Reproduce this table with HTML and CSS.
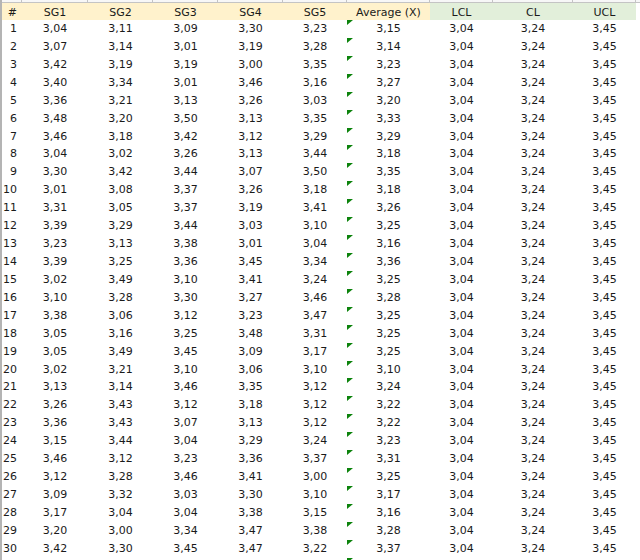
FILE: index.html
```html
<!DOCTYPE html>
<html>
<head>
<meta charset="utf-8">
<link rel="stylesheet" href="styles.css">
</head>
<body>
<div class="sheet">
  <div class="row strip"><span></span><span></span><span></span><span></span><span></span><span></span><span></span><span></span><span></span><span></span><span></span></div>
  <div class="row head">
    <span class="idx">#</span><span>SG1</span><span>SG2</span><span>SG3</span><span>SG4</span><span>SG5</span><span>Average (X)</span><span class="g">LCL</span><span class="g">CL</span><span class="g">UCL</span><span class="end"></span>
  </div>
  <div class="row"><span class="idx">1</span><span>3,04</span><span>3,11</span><span>3,09</span><span>3,30</span><span>3,23</span><span class="avg">3,15</span><span>3,04</span><span>3,24</span><span>3,45</span><span></span></div>
  <div class="row"><span class="idx">2</span><span>3,07</span><span>3,14</span><span>3,01</span><span>3,19</span><span>3,28</span><span class="avg">3,14</span><span>3,04</span><span>3,24</span><span>3,45</span><span></span></div>
  <div class="row"><span class="idx">3</span><span>3,42</span><span>3,19</span><span>3,19</span><span>3,00</span><span>3,35</span><span class="avg">3,23</span><span>3,04</span><span>3,24</span><span>3,45</span><span></span></div>
  <div class="row"><span class="idx">4</span><span>3,40</span><span>3,34</span><span>3,01</span><span>3,46</span><span>3,16</span><span class="avg">3,27</span><span>3,04</span><span>3,24</span><span>3,45</span><span></span></div>
  <div class="row"><span class="idx">5</span><span>3,36</span><span>3,21</span><span>3,13</span><span>3,26</span><span>3,03</span><span class="avg">3,20</span><span>3,04</span><span>3,24</span><span>3,45</span><span></span></div>
  <div class="row"><span class="idx">6</span><span>3,48</span><span>3,20</span><span>3,50</span><span>3,13</span><span>3,35</span><span class="avg">3,33</span><span>3,04</span><span>3,24</span><span>3,45</span><span></span></div>
  <div class="row"><span class="idx">7</span><span>3,46</span><span>3,18</span><span>3,42</span><span>3,12</span><span>3,29</span><span class="avg">3,29</span><span>3,04</span><span>3,24</span><span>3,45</span><span></span></div>
  <div class="row"><span class="idx">8</span><span>3,04</span><span>3,02</span><span>3,26</span><span>3,13</span><span>3,44</span><span class="avg">3,18</span><span>3,04</span><span>3,24</span><span>3,45</span><span></span></div>
  <div class="row"><span class="idx">9</span><span>3,30</span><span>3,42</span><span>3,44</span><span>3,07</span><span>3,50</span><span class="avg">3,35</span><span>3,04</span><span>3,24</span><span>3,45</span><span></span></div>
  <div class="row"><span class="idx">10</span><span>3,01</span><span>3,08</span><span>3,37</span><span>3,26</span><span>3,18</span><span class="avg">3,18</span><span>3,04</span><span>3,24</span><span>3,45</span><span></span></div>
  <div class="row"><span class="idx">11</span><span>3,31</span><span>3,05</span><span>3,37</span><span>3,19</span><span>3,41</span><span class="avg">3,26</span><span>3,04</span><span>3,24</span><span>3,45</span><span></span></div>
  <div class="row"><span class="idx">12</span><span>3,39</span><span>3,29</span><span>3,44</span><span>3,03</span><span>3,10</span><span class="avg">3,25</span><span>3,04</span><span>3,24</span><span>3,45</span><span></span></div>
  <div class="row"><span class="idx">13</span><span>3,23</span><span>3,13</span><span>3,38</span><span>3,01</span><span>3,04</span><span class="avg">3,16</span><span>3,04</span><span>3,24</span><span>3,45</span><span></span></div>
  <div class="row"><span class="idx">14</span><span>3,39</span><span>3,25</span><span>3,36</span><span>3,45</span><span>3,34</span><span class="avg">3,36</span><span>3,04</span><span>3,24</span><span>3,45</span><span></span></div>
  <div class="row"><span class="idx">15</span><span>3,02</span><span>3,49</span><span>3,10</span><span>3,41</span><span>3,24</span><span class="avg">3,25</span><span>3,04</span><span>3,24</span><span>3,45</span><span></span></div>
  <div class="row"><span class="idx">16</span><span>3,10</span><span>3,28</span><span>3,30</span><span>3,27</span><span>3,46</span><span class="avg">3,28</span><span>3,04</span><span>3,24</span><span>3,45</span><span></span></div>
  <div class="row"><span class="idx">17</span><span>3,38</span><span>3,06</span><span>3,12</span><span>3,23</span><span>3,47</span><span class="avg">3,25</span><span>3,04</span><span>3,24</span><span>3,45</span><span></span></div>
  <div class="row"><span class="idx">18</span><span>3,05</span><span>3,16</span><span>3,25</span><span>3,48</span><span>3,31</span><span class="avg">3,25</span><span>3,04</span><span>3,24</span><span>3,45</span><span></span></div>
  <div class="row"><span class="idx">19</span><span>3,05</span><span>3,49</span><span>3,45</span><span>3,09</span><span>3,17</span><span class="avg">3,25</span><span>3,04</span><span>3,24</span><span>3,45</span><span></span></div>
  <div class="row"><span class="idx">20</span><span>3,02</span><span>3,21</span><span>3,10</span><span>3,06</span><span>3,10</span><span class="avg">3,10</span><span>3,04</span><span>3,24</span><span>3,45</span><span></span></div>
  <div class="row"><span class="idx">21</span><span>3,13</span><span>3,14</span><span>3,46</span><span>3,35</span><span>3,12</span><span class="avg">3,24</span><span>3,04</span><span>3,24</span><span>3,45</span><span></span></div>
  <div class="row"><span class="idx">22</span><span>3,26</span><span>3,43</span><span>3,12</span><span>3,18</span><span>3,12</span><span class="avg">3,22</span><span>3,04</span><span>3,24</span><span>3,45</span><span></span></div>
  <div class="row"><span class="idx">23</span><span>3,36</span><span>3,43</span><span>3,07</span><span>3,13</span><span>3,12</span><span class="avg">3,22</span><span>3,04</span><span>3,24</span><span>3,45</span><span></span></div>
  <div class="row"><span class="idx">24</span><span>3,15</span><span>3,44</span><span>3,04</span><span>3,29</span><span>3,24</span><span class="avg">3,23</span><span>3,04</span><span>3,24</span><span>3,45</span><span></span></div>
  <div class="row"><span class="idx">25</span><span>3,46</span><span>3,12</span><span>3,23</span><span>3,36</span><span>3,37</span><span class="avg">3,31</span><span>3,04</span><span>3,24</span><span>3,45</span><span></span></div>
  <div class="row"><span class="idx">26</span><span>3,12</span><span>3,28</span><span>3,46</span><span>3,41</span><span>3,00</span><span class="avg">3,25</span><span>3,04</span><span>3,24</span><span>3,45</span><span></span></div>
  <div class="row"><span class="idx">27</span><span>3,09</span><span>3,32</span><span>3,03</span><span>3,30</span><span>3,10</span><span class="avg">3,17</span><span>3,04</span><span>3,24</span><span>3,45</span><span></span></div>
  <div class="row"><span class="idx">28</span><span>3,17</span><span>3,04</span><span>3,04</span><span>3,38</span><span>3,15</span><span class="avg">3,16</span><span>3,04</span><span>3,24</span><span>3,45</span><span></span></div>
  <div class="row"><span class="idx">29</span><span>3,20</span><span>3,00</span><span>3,34</span><span>3,47</span><span>3,38</span><span class="avg">3,28</span><span>3,04</span><span>3,24</span><span>3,45</span><span></span></div>
  <div class="row"><span class="idx">30</span><span>3,42</span><span>3,30</span><span>3,45</span><span>3,47</span><span>3,22</span><span class="avg">3,37</span><span>3,04</span><span>3,24</span><span>3,45</span><span></span></div>
  <div class="row"><span class="idx"></span><span></span><span></span><span></span><span></span><span></span><span class="avg"></span><span></span><span></span><span></span><span></span></div>
</div>
</body>
</html>
```

FILE: styles.css
```css
html, body {
  margin: 0;
  padding: 0;
  background: #ffffff;
  overflow: hidden;
}
body {
  width: 640px;
  height: 560px;
}
.sheet {
  border-left: 2px solid #b4b4b4;
  height: 560px;
  box-sizing: border-box;
  font-family: "DejaVu Sans", sans-serif;
  font-size: 11px;
  color: #1a1a1a;
}
.row {
  display: grid;
  grid-template-columns: 20px 66px 65px 65px 65px 64px 83px 63px 80px 63px 1fr;
  height: 17.93px;
  line-height: 17.93px;
}
.row > span {
  position: relative;
  text-align: center;
  white-space: nowrap;
}
.row > .idx {
  text-align: right;
  padding-right: 5px;
}
.strip {
  height: 2px;
  line-height: 2px;
  background: #f7f7f7;
  border-bottom: 1px solid #c4c4c4;
}
.strip > span {
  border-right: 1px solid #c4c4c4;
}
.strip > span:last-child {
  border-right: none;
}
.head {
  height: 17px;
  line-height: 14px;
  box-sizing: border-box;
  padding-top: 3px;
  background: #fff2cc;
}
.head > span {
  margin-top: -3px;
  padding-top: 3px;
}
.head > .g {
  background: #e2efda;
}
.head > .end {
  background: #ffffff;
}
.avg::before {
  content: "";
  position: absolute;
  left: 0;
  top: 0;
  width: 0;
  height: 0;
  border-top: 5px solid #0c830c;
  border-right: 6px solid transparent;
}
```
